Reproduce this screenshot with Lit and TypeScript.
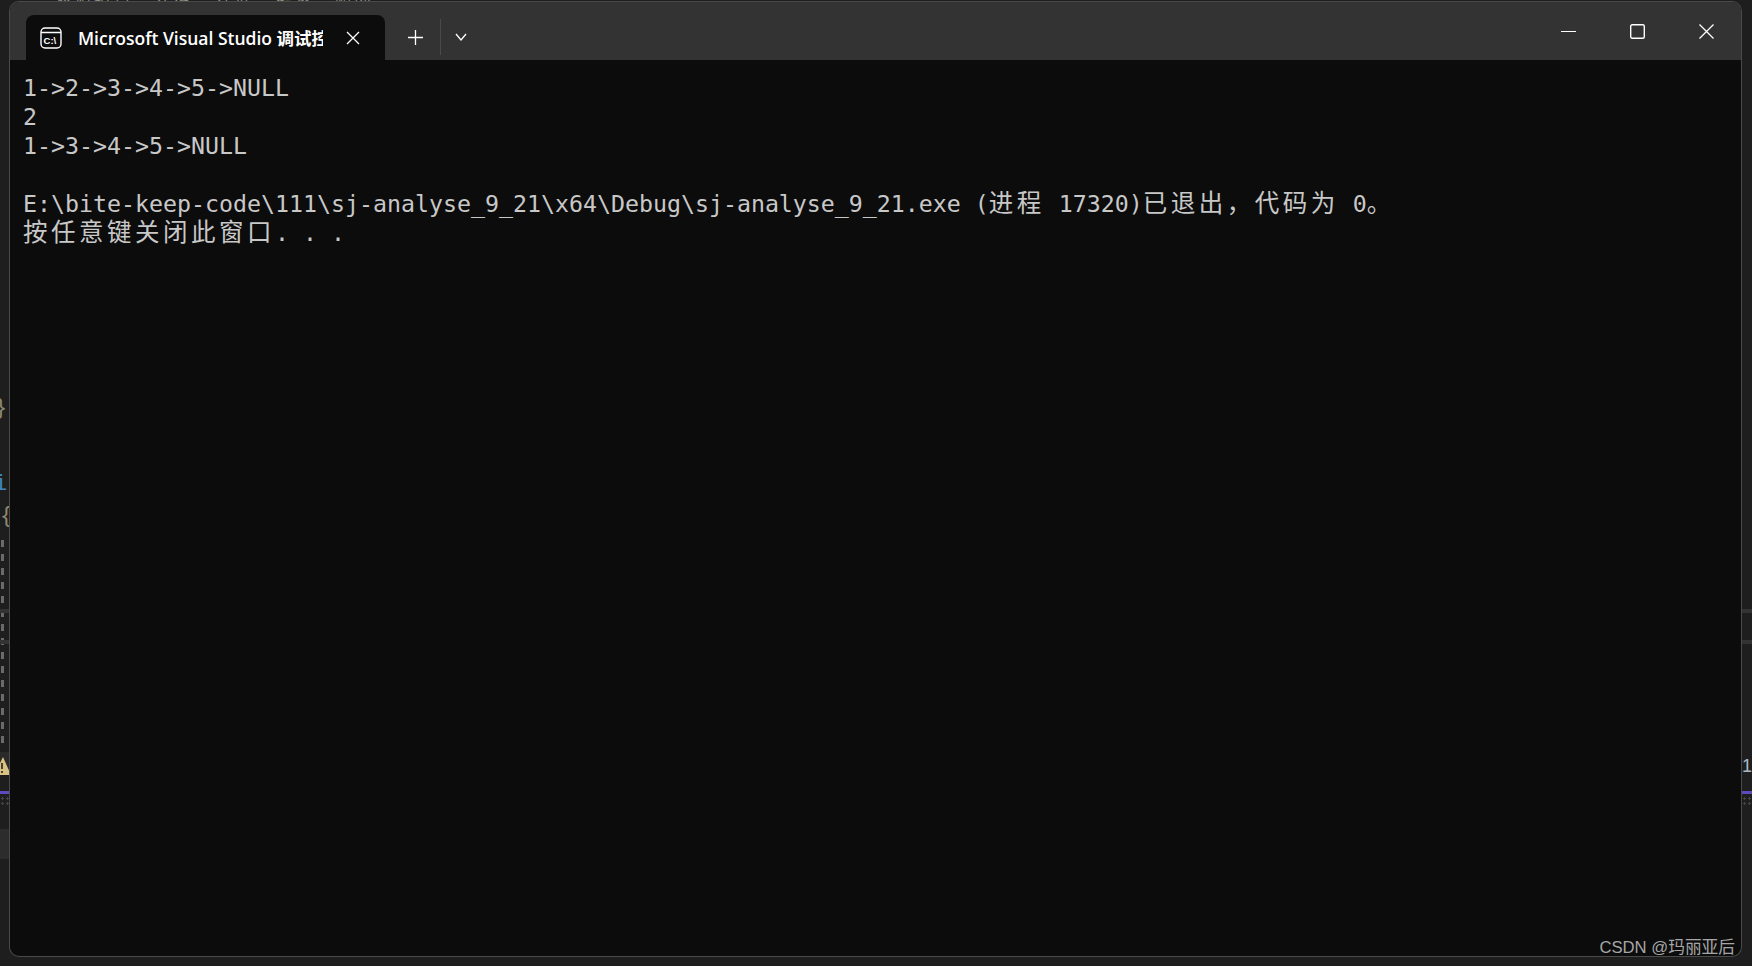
import { LitElement, html, css } from "lit";
import { customElement } from "lit/decorators.js";

@customElement("app-root")
export class AppRoot extends LitElement {
  static styles = css`
    :host { display: block; position: relative; width: 1752px; height: 966px; overflow: hidden; background: #1e1e1e; }
    .scrap { position: absolute; }
    .peek { left: 55px; top: -14px; font: 16px/16px "Noto Sans CJK SC", sans-serif; color: #8f8f80; white-space: pre; letter-spacing: 3.5px; }
    .code { font: 22px "Liberation Mono", monospace; }
    .brace1 { left: -6px; top: 396px; color: #8d8a70; }
    .fn { left: -6px; top: 472px; color: #3f86c0; }
    .brace2 { left: 0; top: 504px; color: #8d8a70; }
    .dash { left: 1px; top: 540px; width: 3px; height: 208px; background: repeating-linear-gradient(#6a6a6a 0 7px, transparent 7px 14px); }
    .warnbg { left: 0; top: 752px; width: 10px; height: 23px; background: #2a2a2a; }
    .warn { left: 0; top: 757px; width: 10px; height: 18px; }
    .band { height: 4px; width: 10px; background: #333; }
    .b1 { left: 0; top: 609px; } .b2 { left: 0; top: 640px; } .b3 { left: 1742px; top: 609px; } .b4 { left: 1742px; top: 640px; }
    .p1 { left: 0; top: 791px; height: 3px; background: #5b4bc0; } .p2 { left: 1742px; top: 791px; height: 3px; background: #5b4bc0; }
    .dots { top: 796px; width: 10px; height: 10px; background: radial-gradient(circle, #444 0 1px, transparent 1.4px) 0 0 / 5px 5px; }
    .d1 { left: 0; } .d2 { left: 1742px; }
    .panel { left: 0; top: 829px; width: 10px; height: 30px; background: #2c2c2c; }
    .one { left: 1742px; top: 756px; font: 18px "Liberation Sans", sans-serif; color: #a8b8c8; }

    .window { position: absolute; left: 10px; top: 2px; width: 1731px; height: 954px; box-sizing: border-box; display: flex; flex-direction: column; overflow: hidden;
      border-radius: 9px; background: #0c0c0c; box-shadow: 0 0 0 1px #4a4a4a; }
    .titlebar { height: 58px; flex: none; background: #333333; display: flex; align-items: flex-end; padding-left: 16px; }
    .tab { width: 359px; height: 45px; box-sizing: border-box; flex: none; background: #0c0c0c; border-radius: 8px 8px 0 0; display: flex; align-items: center; padding-left: 14px; color: #fff; }
    .tabicon { width: 22px; height: 22px; flex: none; }
    .tabtitle { width: 245px; margin-left: 16px; overflow: hidden; white-space: nowrap; font: 600 17.5px "Open Sans", "Noto Sans CJK SC", sans-serif; }
    .x { width: 16px; height: 16px; margin-left: 22px; flex: none; }
    .newtab { display: flex; align-items: center; height: 45px; margin-left: 23px; flex: none; }
    .plus { width: 15px; height: 15px; margin-right: 17px; margin-top: -1px; }
    .sep { width: 1px; height: 36px; background: #4a4a4a; margin-top: -1px; }
    .chev { width: 12px; height: 8px; margin-left: 14px; margin-top: -1px; }
    .spacer { flex: 1; }
    .controls { display: flex; height: 58px; flex: none; align-items: center; padding-right: 27px; gap: 54px; }
    .controls svg { width: 15px; height: 15px; display: block; margin-top: 1px; }

    .term { flex: 1; padding: 13px 13px; font: 23.26px/29px "DejaVu Sans Mono", monospace; color: #c8c8c8; white-space: pre; }
    .line { height: 29px; display: block; }
    .cj { font: 24.5px/0 "Noto Sans CJK SC", sans-serif; letter-spacing: 3.5px; }
    .wm { position: absolute; right: 17px; top: 937px; font: 16.7px/22px "Liberation Sans", "Noto Sans CJK SC", sans-serif; color: #a6a6a6; }
  `;

  render() {
    return html`
      <div class="scrap peek">数据结构   算法   分析   链表   删除</div>
      <div class="scrap code brace1">}</div>
      <div class="scrap code fn">i</div>
      <div class="scrap code brace2">{</div>
      <div class="scrap dash"></div>
      <div class="scrap warnbg"></div>
      <svg class="scrap warn" viewBox="0 0 10 18"><path d="M3 0 L11 18 H-6 Z" fill="#d9c382"/><path d="M2 6v6M2 14v2" stroke="#222" stroke-width="1.6"/></svg>
      <div class="scrap band b1"></div><div class="scrap band b2"></div><div class="scrap band b3"></div><div class="scrap band b4"></div>
      <div class="scrap band p1"></div><div class="scrap band p2"></div>
      <div class="scrap dots d1"></div><div class="scrap dots d2"></div>
      <div class="scrap panel"></div>
      <div class="scrap one">1</div>

      <div class="window">
        <div class="titlebar">
          <div class="tab">
            <svg class="tabicon" viewBox="0 0 22 22" fill="none" stroke="#fff" stroke-width="1.4"><rect x="1" y="1" width="20" height="20" rx="4"/><path d="M1 5.5H21"/><text x="3.6" y="16.5" font-family="Liberation Sans" font-weight="700" font-size="9.5" fill="#fff" stroke="none">C:\\</text></svg>
            <div class="tabtitle">Microsoft Visual Studio 调试控制台</div>
            <svg class="x" viewBox="0 0 16 16" fill="none" stroke="#fff" stroke-width="1.3"><path d="M2 2L14 14M14 2L2 14"/></svg>
          </div>
          <div class="newtab">
            <svg class="plus" viewBox="0 0 15 15" fill="none" stroke="#fff" stroke-width="1.3"><path d="M7.5 0V15M0 7.5H15"/></svg>
            <div class="sep"></div>
            <svg class="chev" viewBox="0 0 12 8" fill="none" stroke="#fff" stroke-width="1.3"><path d="M1 1L6 7L11 1"/></svg>
          </div>
          <div class="spacer"></div>
          <div class="controls">
            <svg viewBox="0 0 15 15" fill="none" stroke="#fff" stroke-width="1.2"><path d="M0 7.5H15"/></svg>
            <svg viewBox="0 0 15 15" fill="none" stroke="#fff" stroke-width="1.4"><rect x="0.7" y="0.7" width="13.6" height="13.6" rx="1.5"/></svg>
            <svg viewBox="0 0 15 15" fill="none" stroke="#fff" stroke-width="1.3"><path d="M0.5 0.5L14.5 14.5M14.5 0.5L0.5 14.5"/></svg>
          </div>
        </div>
        <div class="term"><span class="line">1-&gt;2-&gt;3-&gt;4-&gt;5-&gt;NULL</span><span class="line">2</span><span class="line">1-&gt;3-&gt;4-&gt;5-&gt;NULL</span><span class="line"></span><span class="line">E:\\bite-keep-code\\111\\sj-analyse_9_21\\x64\\Debug\\sj-analyse_9_21.exe (<span class="cj">进程</span> 17320)<span class="cj">已退出，代码为</span> 0<span class="cj">。</span></span><span class="line"><span class="cj">按任意键关闭此窗口</span>. . .</span></div>
      </div>
      <div class="wm">CSDN @玛丽亚后</div>
    `;
  }
}
